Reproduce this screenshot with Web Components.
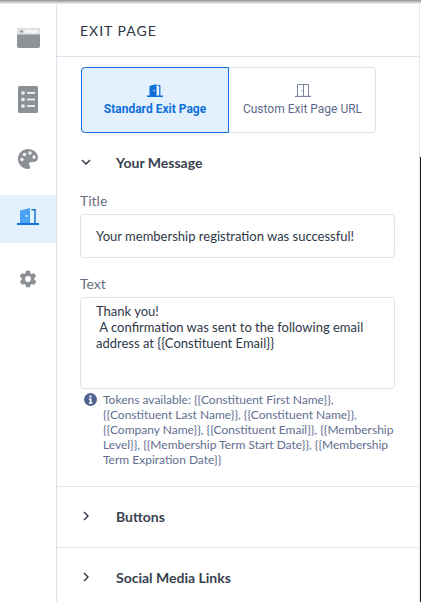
<!DOCTYPE html>
<html>
<head>
<meta charset="utf-8">
<style>
  html, body { margin: 0; padding: 0; background: #fff; }
  body { width: 421px; height: 602px; overflow: hidden; font-family: "Lato", "Liberation Sans", sans-serif; }
</style>
</head>
<body>
<exit-app></exit-app>

<script>
const ICONS = {
  browser: `<svg width="23" height="20" viewBox="0 0 23 20"><rect width="23" height="20" rx="2" fill="#8f9396"/><path d="M2 0h19a2 2 0 0 1 2 2v4.500H0V2a2 2 0 0 1 2-2z" fill="#dfe1e3"/><rect x="3" y="2.500" width="3" height="2" fill="#8f9396"/><rect x="8" y="2" width="12.500" height="3" fill="#f4f5f6"/></svg>`,
  list: `<svg width="20" height="27" viewBox="0 0 20 27"><rect width="20" height="27" rx="1.500" fill="#8c9094"/><g fill="#f1f2f3"><circle cx="5" cy="7" r="1.800"/><circle cx="5" cy="13.500" r="1.800"/><circle cx="5" cy="20" r="1.800"/><rect x="9" y="6" width="8" height="1.800"/><rect x="9" y="12.600" width="8" height="1.800"/><rect x="9" y="19.100" width="8" height="1.800"/></g></svg>`,
  palette: `<svg width="20" height="20" viewBox="0 0 20 20"><path d="M10 0C4.500 0 0 4.400 0 10s4.500 10 10 10c1.300 0 2.200-.9 2.200-2.100 0-.6-.2-1-.6-1.500-.3-.4-.6-.9-.6-1.400 0-1.100.9-1.900 2-1.900h2.400c2.700 0 4.600-2 4.600-4.600C20 3.700 15.500 0 10 0z" fill="#8c9094"/><g fill="#f4f5f6"><circle cx="4" cy="10.500" r="1.700"/><circle cx="6.500" cy="5.500" r="1.700"/><circle cx="12" cy="4" r="1.700"/><circle cx="16" cy="8" r="1.700"/></g></svg>`,
  door: `<svg class="lift" width="22" height="17" viewBox="0 0 22 17"><path d="M3 15V2.500L13 0v15z" fill="#4ba3f4"/><circle cx="9.500" cy="8" r="1" fill="#e3f1fe"/><path d="M14.500 1.800h3.500V15" fill="none" stroke="#1274d8" stroke-width="1.500"/><rect y="15" width="22" height="2" fill="#1274d8"/></svg>`,
  gear: `<svg width="20" height="20" viewBox="0 0 24 24"><path fill="#8c9094" fill-rule="evenodd" d="M19.400 13c.1-.3.100-.7.100-1s0-.7-.1-1l2.100-1.600c.2-.1.200-.4.100-.6l-2-3.500c-.1-.2-.4-.3-.6-.2l-2.500 1c-.5-.4-1.100-.7-1.700-1l-.4-2.600c0-.3-.2-.5-.5-.5h-4c-.3 0-.5.200-.5.400l-.4 2.700c-.6.200-1.200.6-1.700 1l-2.500-1c-.2-.1-.5 0-.6.200l-2 3.500c-.1.200-.1.500.1.600L4.600 11c-.1.300-.1.700-.1 1s0 .7.100 1l-2.100 1.600c-.2.100-.2.400-.1.600l2 3.500c.1.200.4.300.6.200l2.500-1c.5.400 1.100.7 1.700 1l.4 2.600c0 .3.200.5.500.5h4c.3 0 .5-.2.500-.4l.4-2.700c.6-.2 1.200-.6 1.700-1l2.500 1c.2.100.5 0 .6-.2l2-3.500c.1-.2.100-.5-.1-.6zM12 15.500a3.500 3.500 0 1 1 0-7 3.500 3.500 0 0 1 0 7z"/></svg>`,
  doorSolid: `<svg width="16" height="13" viewBox="0 0 16 13"><path d="M2.500 12V2L9.500 0v12z" fill="#0f6fd8"/><circle cx="7" cy="6.500" r=".8" fill="#e3f1fe"/><path d="M10.500 1.500h2.300V12" fill="none" stroke="#0f6fd8" stroke-width="1.200"/><rect y="11.500" width="16" height="1.500" fill="#0f6fd8"/></svg>`,
  doorOutline: `<svg width="16" height="13" viewBox="0 0 16 13"><path d="M2.500 12V.5h11V12M8.500 1v11" fill="none" stroke="#7a85a5"/><rect x="6.500" y="6" width="1" height="1.500" fill="#7a85a5"/><rect y="11.800" width="16" height="1.200" fill="#7a85a5"/></svg>`,
  chevronDown: `<svg width="10" height="6" viewBox="0 0 10 6"><path d="M1 1l4 4 4-4" fill="none" stroke="#333b48" stroke-width="1.500"/></svg>`,
  chevronRight: `<svg width="6" height="10" viewBox="0 0 6 10"><path d="M1 1l4 4-4 4" fill="none" stroke="#333b48" stroke-width="1.500"/></svg>`,
  info: `<svg width="13" height="13" viewBox="0 0 13 13"><circle cx="6.500" cy="6.500" r="6.500" fill="#4f6391"/><rect x="5.500" y="2.500" width="2" height="2" fill="#fff"/><path d="M4.800 5.500h2.700v4h1v1.200H4.800V9.500h1V6.700h-1z" fill="#fff"/></svg>`
};

class RailItem extends HTMLElement {
  constructor() {
    super();
    this.attachShadow({ mode: 'open' });
  }
  connectedCallback() {
    this.shadowRoot.innerHTML = `
      <style>
        :host { display: flex; height: 48px; align-items: center; justify-content: center; }
        :host([active]) { background: #e3f1fe; }
        svg { display: block; }
        svg.lift { margin-bottom: 5px; }
        :host([icon="browser"]) svg { margin-bottom: 2px; }
      </style>
      ${ICONS[this.getAttribute('icon')]}
    `;
  }
}

class SideRail extends HTMLElement {
  constructor() {
    super();
    this.attachShadow({ mode: 'open' });
    this.shadowRoot.innerHTML = `
      <style>
        :host { display: flex; flex-direction: column; gap: 12px; box-sizing: border-box; width: 57px; padding-top: 11px; border-right: 1px solid #dfe2ec; }
      </style>
      <slot></slot>
    `;
  }
}

class ExitTab extends HTMLElement {
  constructor() {
    super();
    this.attachShadow({ mode: 'open' });
  }
  connectedCallback() {
    this.shadowRoot.innerHTML = `
      <style>
        :host { display: flex; flex-direction: column; align-items: center; justify-content: center; gap: 5px; box-sizing: border-box; height: 66px; font: 12px "Roboto", "Liberation Sans", sans-serif; color: #5d6a8c; }
        :host([selected]) { color: #0f6fd8; font-weight: 700; background: #e3f1fe; }
        svg { display: block; }
      </style>
      ${ICONS[this.getAttribute('icon')]}
      <slot></slot>
    `;
  }
}

class TabGroup extends HTMLElement {
  constructor() {
    super();
    this.attachShadow({ mode: 'open' });
    this.shadowRoot.innerHTML = `
      <style>
        :host { display: grid; grid-template-columns: 148px 147px; width: 295px; margin: 10px 0 0 24px; border-radius: 4px; box-shadow: inset 0 0 0 1px #dfe2ec; }
        ::slotted(:first-child) { border: 1px solid #0f6fd8; border-radius: 4px 0 0 4px; }
      </style>
      <slot></slot>
    `;
  }
}

class SectionHead extends HTMLElement {
  constructor() {
    super();
    this.attachShadow({ mode: 'open' });
  }
  connectedCallback() {
    const open = this.hasAttribute('open');
    this.shadowRoot.innerHTML = `
      <style>
        :host { display: flex; align-items: center; height: 60px; padding-bottom: 2px; padding-left: 24px; box-sizing: border-box; font-size: 14px; font-weight: 700; color: #3a4250; }
        .ico { width: 12px; display: flex; justify-content: center; margin-right: 24px; margin-left: -1px; }
        svg { display: block; }
      </style>
      <span class="ico">${open ? ICONS.chevronDown : ICONS.chevronRight}</span>
      <slot></slot>
    `;
  }
}

class TextField extends HTMLElement {
  constructor() {
    super();
    this.attachShadow({ mode: 'open' });
  }
  connectedCallback() {
    const h = this.getAttribute('box-height');
    const multi = this.hasAttribute('multi');
    this.shadowRoot.innerHTML = `
      <style>
        :host { display: block; margin: 0 24px 0 23px; font-size: 14px; }
        label { display: block; color: #6a7186; line-height: 17px; margin-bottom: 5px; }
        .box { box-sizing: border-box; height: ${h}px; border: 1px solid #dfe2ec; border-radius: 4px; padding: ${multi ? '5px' : '0'} 15px; color: #2e3848; font-size: 13px; line-height: 16px; white-space: pre-wrap; ${multi ? '' : 'display: flex; align-items: center;'} }
      </style>
      <label>${this.getAttribute('label')}</label>
      <div class="box"><slot></slot></div>
    `;
  }
}

class TokenHelp extends HTMLElement {
  constructor() {
    super();
    this.attachShadow({ mode: 'open' });
    this.shadowRoot.innerHTML = `
      <style>
        :host { display: flex; gap: 6px; margin: 3px 25px 0 27px; font-size: 12px; line-height: 15px; color: #626e90; }
        svg { display: block; flex: none; margin-top: 1px; }
      </style>
      ${ICONS.info}
      <div><slot></slot></div>
    `;
  }
}

class PagePanel extends HTMLElement {
  constructor() {
    super();
    this.attachShadow({ mode: 'open' });
    this.shadowRoot.innerHTML = `
      <style>
        :host { display: block; flex: 1; min-width: 0; border-right: 1px solid #e4e6f0; }
        header { height: 53px; box-sizing: border-box; padding: 18px 0 0 23px; border-bottom: 1px solid #dfe2ec; font-size: 14px; letter-spacing: 1px; line-height: 17px; color: #2c3646; }
      </style>
      <header>EXIT PAGE</header>
      <slot></slot>
    `;
  }
}

class ExitApp extends HTMLElement {
  constructor() {
    super();
    this.attachShadow({ mode: 'open' });
    this.shadowRoot.innerHTML = `
      <style>
        :host { display: block; width: 421px; height: 602px; overflow: hidden; }
        .shade { height: 4px; background: linear-gradient(#8f9193, #c4c5c7 50%, #f4f4f5); }
        .cols { display: flex; height: 598px; }
        .edge { flex: none; width: 1px; background: linear-gradient(#fff 153px, #1c201c 153px); }
        .fields { display: flex; flex-direction: column; gap: 17px; margin-top: -1px; }
        .rule { height: 1px; background: #e3e5ec; margin-top: 19px; }
        .rule.next { margin-top: 0; }
      </style>
      <div class="shade"></div>
      <div class="cols">
        <side-rail>
          <rail-item icon="browser"></rail-item>
          <rail-item icon="list"></rail-item>
          <rail-item icon="palette"></rail-item>
          <rail-item icon="door" active></rail-item>
          <rail-item icon="gear"></rail-item>
        </side-rail>
        <page-panel>
          <tab-group>
            <exit-tab icon="doorSolid" selected>Standard Exit Page</exit-tab>
            <exit-tab icon="doorOutline">Custom Exit Page URL</exit-tab>
          </tab-group>
          <section-head open>Your Message</section-head>
          <div class="fields">
            <text-field label="Title" box-height="44">Your membership registration was successful!</text-field>
            <text-field label="Text" box-height="92" multi>Thank you!
 A confirmation was sent to the following email address at {{Constituent Email}}</text-field>
          </div>
          <token-help>Tokens available: {{Constituent First Name}}, {{Constituent Last Name}}, {{Constituent Name}}, {{Company Name}}, {{Constituent Email}}, {{Membership Level}}, {{Membership Term Start Date}}, {{Membership Term Expiration Date}}</token-help>
          <div class="rule"></div>
          <section-head>Buttons</section-head>
          <div class="rule next"></div>
          <section-head>Social Media Links</section-head>
        </page-panel>
        <div class="edge"></div>
      </div>
    `;
  }
}

customElements.define('rail-item', RailItem);
customElements.define('side-rail', SideRail);
customElements.define('exit-tab', ExitTab);
customElements.define('tab-group', TabGroup);
customElements.define('section-head', SectionHead);
customElements.define('text-field', TextField);
customElements.define('token-help', TokenHelp);
customElements.define('page-panel', PagePanel);
customElements.define('exit-app', ExitApp);
</script>
</body>
</html>
